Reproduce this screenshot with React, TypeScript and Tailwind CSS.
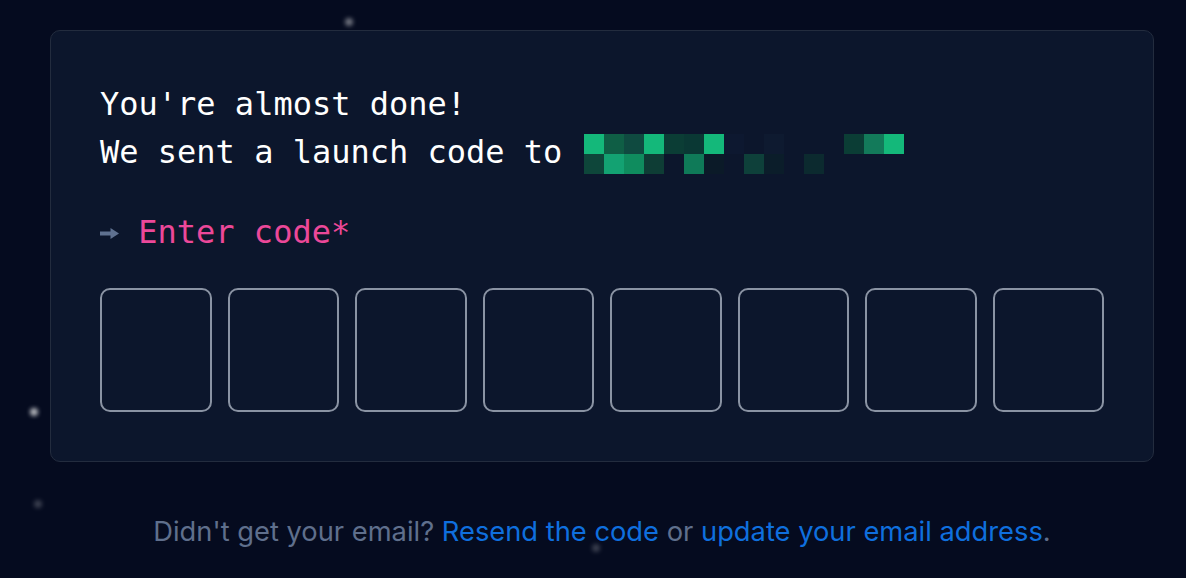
const mosaic: string[][] = [
  ['#14b87a', '#0f5e45', '#0f4a40', '#14b87a', '#0b3d35', '#0a3834', '#14b87a', '#0d1830', '', '#0e1a30', '', '', '', '#0b3d35', '#137a5a', '#14b87a'],
  ['#0e463a', '#13a272', '#0f8c5e', '#0e3d35', '', '#0f7a58', '#0b1a28', '', '#0e403a', '#0b1d2a', '', '#0c2a2f', '', '', '', ''],
];

function RedactedEmail() {
  return (
    <span className="ml-[2px] inline-flex flex-col align-middle">
      {mosaic.map((row, r) => (
        <span key={r} className="flex">
          {row.map((c, i) => (
            <span key={i} className="h-5 w-5" style={{ backgroundColor: c || 'transparent' }} />
          ))}
        </span>
      ))}
    </span>
  );
}

function Star({ className }: { className: string }) {
  return <span className={`absolute rounded-full bg-white/70 blur-[2px] ${className}`} />;
}

export default function App() {
  return (
    <div className="relative min-h-screen overflow-hidden bg-[#050b1f] pl-[50px] pt-[30px]">
      {/* background stars */}
      <Star className="left-[345px] top-[18px] h-2 w-2 opacity-60" />
      <Star className="left-[30px] top-[408px] h-2 w-2" />
      <Star className="left-[34px] top-[500px] h-2 w-2 opacity-30" />
      <Star className="left-[592px] top-[544px] h-2 w-2 opacity-30" />

      <div className="flex w-[1104px] flex-col gap-[54px]">
        <div className="flex flex-col gap-8 rounded-[10px] border border-[#232c3e] bg-[#0c162c] p-[49px] font-['DejaVu_Sans_Mono',monospace] text-[32px] leading-[48px]">
          <div className="text-white">
            <p>You're almost done!</p>
            <p>
              We sent a launch code to <RedactedEmail />
            </p>
          </div>
          <p>
            <svg width="19" height="11" viewBox="0 0 19 11" className="inline-block align-[4px] text-[#5f7190]" fill="currentColor">
              <rect x="0" y="3.5" width="13" height="4" />
              <path d="M10.5 0 L19 5.5 L10.5 11 Z" />
            </svg>{' '}
            <span className="text-[#ec4899]">Enter code*</span>
          </p>
          <div className="grid grid-cols-8 gap-4">
            {Array.from({ length: 8 }).map((_, i) => (
              <input
                key={i}
                maxLength={1}
                className="h-[124px] w-full rounded-[10px] border-2 border-[#8a93a3] bg-transparent text-center text-white outline-none"
              />
            ))}
          </div>
        </div>

        <p className="text-center font-['Inter',sans-serif] text-[27.3px] leading-8 text-[#5f6f8c]">
          Didn't get your email?{' '}
          <a className="text-[#0f6fde]" href="#">Resend the code</a> or{' '}
          <a className="text-[#0f6fde]" href="#">update your email address</a>.
        </p>
      </div>
    </div>
  );
}
